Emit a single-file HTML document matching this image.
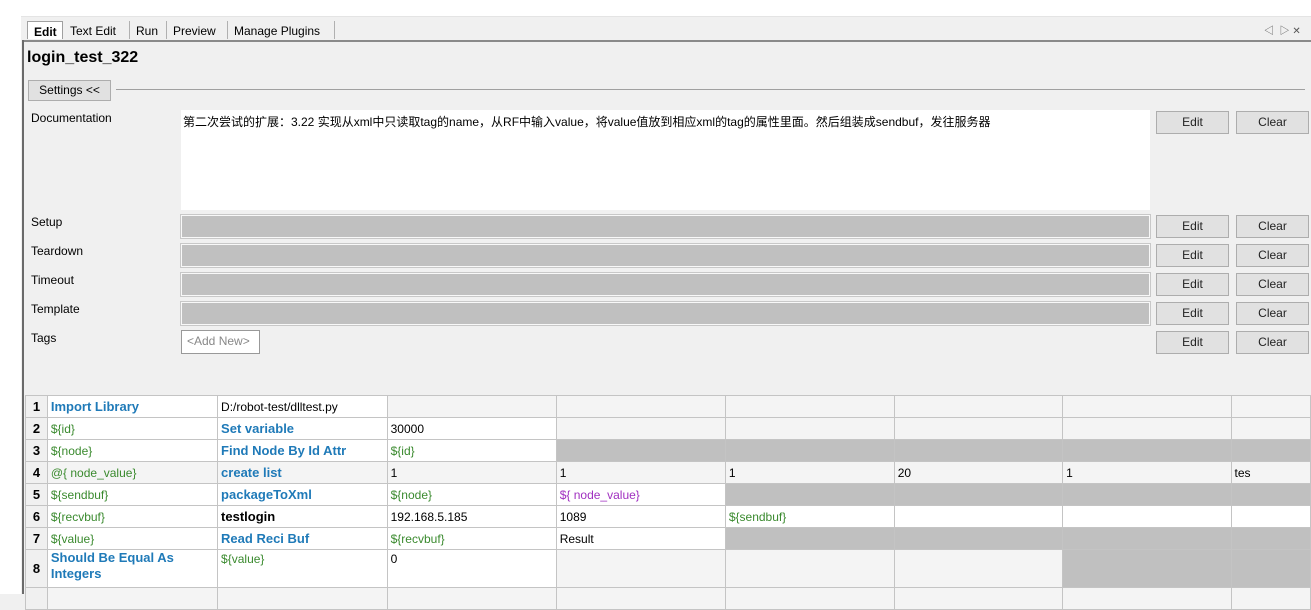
<!DOCTYPE html>
<html><head><meta charset="utf-8"><style>
*{margin:0;padding:0;box-sizing:border-box}
body{width:1311px;height:594px;overflow:hidden;background:#f0f0f0;font-family:Tahoma,"Liberation Sans","Noto Sans CJK SC",sans-serif;font-size:12px;color:#000;position:relative}
.a{position:absolute}
.tab{position:absolute;top:21px;height:18px;padding:3px 6px 0;border-right:1px solid #b0b0b0;font-size:12px}
.btn{position:absolute;width:73px;height:23px;background:#e1e1e1;border:1px solid #adadad;text-align:center;line-height:21px;font-size:12px;color:#222}
.lbl{position:absolute;left:31px;font-size:12px}
.fld{position:absolute;left:181px;width:969px;height:23px;background:#c0c0c0;border:1px solid #f8f8f8;outline:1px solid #c8c8c8}
table{position:absolute;left:25px;top:395px;border-collapse:collapse;table-layout:fixed;background:#fff}
td{border:1px solid #c4c4c4;height:22px;padding:0 0 0 3px;white-space:nowrap;overflow:hidden;font-size:12px;vertical-align:middle;background:#f4f4f4}
td.n{background:#f0f0f0;font-weight:bold;text-align:center;padding:0;font-size:13px}
td.w{background:#fff}
td.g{background:#c0c0c0}
.k{color:#1f7ab8;font-weight:bold;font-size:13px}
.v{color:#3a8a2e}
.p{color:#a030c0}
.b{font-weight:bold;font-size:13px}
</style></head><body>
<div class="a" style="left:0;top:0;width:1311px;height:16px;background:#fff"></div>
<div class="a" style="left:0;top:16px;width:21px;height:578px;background:#fff"></div>
<div class="a" style="left:21px;top:16px;width:1290px;height:1px;background:#e4e4e4"></div>
<div class="tab" style="left:27px;width:36px;background:#fff;font-weight:bold;border:1px solid #a0a0a0;border-bottom:none">Edit</div>
<div class="tab" style="left:64px;width:66px">Text Edit</div>
<div class="tab" style="left:130px;width:37px">Run</div>
<div class="tab" style="left:167px;width:61px">Preview</div>
<div class="tab" style="left:228px;width:107px">Manage Plugins</div>
<div class="a" style="left:1264px;top:22px;font-size:10px;color:#555">◁&nbsp;&nbsp;▷&nbsp;✕</div>
<div class="a" style="left:22px;top:40px;width:1289px;height:2px;background:#8a8a8a"></div>
<div class="a" style="left:22px;top:40px;width:2px;height:554px;background:#6a6a6a"></div>
<div class="a" style="left:27px;top:49px;font:bold 16px 'Liberation Sans',sans-serif">login_test_322</div>
<div class="a" style="left:28px;top:80px;width:83px;height:21px;background:#e1e1e1;border:1px solid #adadad;text-align:center;line-height:19px">Settings &lt;&lt;</div>
<div class="a" style="left:116px;top:89px;width:1189px;height:1px;background:#a0a0a0"></div>
<div class="lbl" style="top:111px">Documentation</div>
<div class="a" style="left:181px;top:110px;width:969px;height:100px;background:#fff;padding:3px 2px;font-family:'Liberation Sans','Noto Sans CJK SC',sans-serif">第二次尝试的扩展：3.22 实现从xml中只读取tag的name，从RF中输入value，将value值放到相应xml的tag的属性里面。然后组装成sendbuf，发往服务器</div>
<div class="lbl" style="top:215px">Setup</div>
<div class="lbl" style="top:244px">Teardown</div>
<div class="lbl" style="top:273px">Timeout</div>
<div class="lbl" style="top:302px">Template</div>
<div class="lbl" style="top:331px">Tags</div>
<div class="fld" style="top:215px"></div>
<div class="fld" style="top:244px"></div>
<div class="fld" style="top:273px"></div>
<div class="fld" style="top:302px"></div>
<div class="a" style="left:181px;top:330px;width:79px;height:24px;background:#fff;border:1px solid #999;color:#888;padding:3px 0 0 5px">&lt;Add New&gt;</div>
<div class="btn" style="left:1156px;top:111px">Edit</div><div class="btn" style="left:1236px;top:111px">Clear</div>
<div class="btn" style="left:1156px;top:215px">Edit</div><div class="btn" style="left:1236px;top:215px">Clear</div>
<div class="btn" style="left:1156px;top:244px">Edit</div><div class="btn" style="left:1236px;top:244px">Clear</div>
<div class="btn" style="left:1156px;top:273px">Edit</div><div class="btn" style="left:1236px;top:273px">Clear</div>
<div class="btn" style="left:1156px;top:302px">Edit</div><div class="btn" style="left:1236px;top:302px">Clear</div>
<div class="btn" style="left:1156px;top:331px">Edit</div><div class="btn" style="left:1236px;top:331px">Clear</div>
<table>
<colgroup><col style="width:22px"><col style="width:171px"><col style="width:170px"><col style="width:170px"><col style="width:170px"><col style="width:170px"><col style="width:170px"><col style="width:170px"><col style="width:80px"></colgroup>
<tr><td class="n">1</td><td class="w k">Import Library</td><td class="w">D:/robot-test/dlltest.py</td><td></td><td></td><td></td><td></td><td></td><td></td></tr>
<tr><td class="n">2</td><td class="w v">${id}</td><td class="w k">Set variable</td><td class="w">30000</td><td></td><td></td><td></td><td></td><td></td></tr>
<tr><td class="n">3</td><td class="w v">${node}</td><td class="w k">Find Node By Id Attr</td><td class="w v">${id}</td><td class="g"></td><td class="g"></td><td class="g"></td><td class="g"></td><td class="g"></td></tr>
<tr><td class="n">4</td><td class="v">@{ node_value}</td><td class="k">create list</td><td>1</td><td>1</td><td>1</td><td>20</td><td>1</td><td>tes</td></tr>
<tr><td class="n">5</td><td class="w v">${sendbuf}</td><td class="w k">packageToXml</td><td class="w v">${node}</td><td class="w p">${ node_value}</td><td class="g"></td><td class="g"></td><td class="g"></td><td class="g"></td></tr>
<tr><td class="n">6</td><td class="w v">${recvbuf}</td><td class="w b">testlogin</td><td class="w">192.168.5.185</td><td class="w">1089</td><td class="w v">${sendbuf}</td><td class="w"></td><td class="w"></td><td class="w"></td></tr>
<tr><td class="n">7</td><td class="w v">${value}</td><td class="w k">Read Reci Buf</td><td class="w v">${recvbuf}</td><td class="w">Result</td><td class="g"></td><td class="g"></td><td class="g"></td><td class="g"></td></tr>
<tr><td class="n" style="height:38px">8</td><td class="w k" style="white-space:normal;vertical-align:top;line-height:16px">Should Be Equal As Integers</td><td class="w v" style="vertical-align:top;padding-top:2px">${value}</td><td class="w" style="vertical-align:top;padding-top:2px">0</td><td></td><td></td><td></td><td class="g"></td><td class="g"></td></tr>
<tr><td class="n"></td><td></td><td></td><td></td><td></td><td></td><td></td><td></td><td></td></tr>
</table>
</body></html>
